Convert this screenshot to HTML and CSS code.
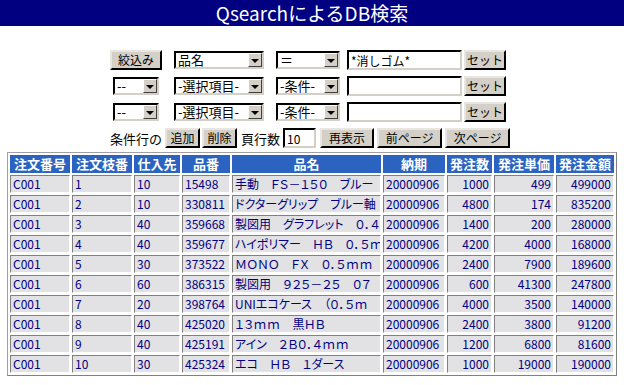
FILE: index.html
```html
<!DOCTYPE html>
<html lang="ja">
<head>
  <meta charset="UTF-8">
  <title>QsearchによるDB検索</title>
  <link rel="stylesheet" href="styles.css">
</head>
<body>
  <h1 class="title">QsearchによるDB検索</h1>

  <!-- 検索条件 -->
  <div class="cond">
    <div class="cond-row">
      <span class="cell-first"><button class="btn btn-filter">絞込み</button></span>
      <span class="sel sel-item"><span class="sel-text">品名</span><span class="sel-arrow"></span></span>
      <span class="sel sel-op"><span class="sel-text">＝</span><span class="sel-arrow"></span></span>
      <input class="txt txt-value" type="text" value="*消しゴム*">
      <button class="btn btn-set">セット</button>
    </div>
    <div class="cond-row">
      <span class="cell-first"><span class="sel sel-andor"><span class="sel-text">--</span><span class="sel-arrow"></span></span></span>
      <span class="sel sel-item"><span class="sel-text">-選択項目-</span><span class="sel-arrow"></span></span>
      <span class="sel sel-op"><span class="sel-text">-条件-</span><span class="sel-arrow"></span></span>
      <input class="txt txt-value" type="text" value="">
      <button class="btn btn-set">セット</button>
    </div>
    <div class="cond-row">
      <span class="cell-first"><span class="sel sel-andor"><span class="sel-text">--</span><span class="sel-arrow"></span></span></span>
      <span class="sel sel-item"><span class="sel-text">-選択項目-</span><span class="sel-arrow"></span></span>
      <span class="sel sel-op"><span class="sel-text">-条件-</span><span class="sel-arrow"></span></span>
      <input class="txt txt-value" type="text" value="">
      <button class="btn btn-set">セット</button>
    </div>
    <div class="cond-row nav-row">
      <span class="label">条件行の</span>
      <button class="btn btn-small">追加</button>
      <button class="btn btn-small">削除</button>
      <span class="label label-rows">頁行数</span>
      <input class="txt txt-rows" type="text" value="10">
      <button class="btn btn-redraw">再表示</button>
      <button class="btn btn-page">前ページ</button>
      <button class="btn btn-page">次ページ</button>
    </div>
  </div>

  <!-- 検索結果 -->
  <table class="result">
    <thead>
      <tr>
        <th class="c-no">注文番号</th>
        <th class="c-br">注文枝番</th>
        <th class="c-sup">仕入先</th>
        <th class="c-code">品番</th>
        <th class="c-name">品名</th>
        <th class="c-date">納期</th>
        <th class="c-qty">発注数</th>
        <th class="c-price">発注単価</th>
        <th class="c-amt">発注金額</th>
      </tr>
    </thead>
    <tbody>
      <tr><td>C001</td><td>1</td><td>10</td><td>15498</td><td class="name">手動　ＦＳ－１５０　ブルー</td><td>20000906</td><td class="num">1000</td><td class="num">499</td><td class="num">499000</td></tr>
      <tr><td>C001</td><td>2</td><td>10</td><td>330811</td><td class="name">ドクターグリップ　ブルー軸</td><td>20000906</td><td class="num">4800</td><td class="num">174</td><td class="num">835200</td></tr>
      <tr><td>C001</td><td>3</td><td>40</td><td>359668</td><td class="name">製図用　グラフレット　０．４</td><td>20000906</td><td class="num">1400</td><td class="num">200</td><td class="num">280000</td></tr>
      <tr><td>C001</td><td>4</td><td>40</td><td>359677</td><td class="name">ハイポリマー　ＨＢ　０．５ｍ</td><td>20000906</td><td class="num">4200</td><td class="num">4000</td><td class="num">168000</td></tr>
      <tr><td>C001</td><td>5</td><td>30</td><td>373522</td><td class="name">ＭＯＮＯ　ＦＸ　０．５ｍｍ</td><td>20000906</td><td class="num">2400</td><td class="num">7900</td><td class="num">189600</td></tr>
      <tr><td>C001</td><td>6</td><td>60</td><td>386315</td><td class="name">製図用　９２５－２５　０７</td><td>20000906</td><td class="num">600</td><td class="num">41300</td><td class="num">247800</td></tr>
      <tr><td>C001</td><td>7</td><td>20</td><td>398764</td><td class="name">UNIエコケース　（０．５ｍ</td><td>20000906</td><td class="num">4000</td><td class="num">3500</td><td class="num">140000</td></tr>
      <tr><td>C001</td><td>8</td><td>40</td><td>425020</td><td class="name">１３ｍｍ　黒ＨＢ</td><td>20000906</td><td class="num">2400</td><td class="num">3800</td><td class="num">91200</td></tr>
      <tr><td>C001</td><td>9</td><td>40</td><td>425191</td><td class="name">アイン　２Ｂ０．４ｍｍ</td><td>20000906</td><td class="num">1200</td><td class="num">6800</td><td class="num">81600</td></tr>
      <tr><td>C001</td><td>10</td><td>30</td><td>425324</td><td class="name">エコ　ＨＢ　１ダース</td><td>20000906</td><td class="num">1000</td><td class="num">19000</td><td class="num">190000</td></tr>
    </tbody>
  </table>
</body>
</html>
```

FILE: styles.css
```css
/* 基本 */
body {
  margin: 0;
  padding: 0;
  background: #fff;
  color: #000;
  font-family: "Noto Sans CJK JP", "Liberation Sans", sans-serif;
  font-size: 12px;
}

/* タイトル */
.title {
  margin: 0;
  height: 26px;
  line-height: 26px;
  background: #000080;
  color: #fff;
  font-size: 19px;
  font-weight: normal;
  text-align: center;
}

/* 検索条件 */
.cond {
  margin: 24px 0 0 107px;
  display: flex;
  flex-direction: column;
  gap: 6px;
}

.cond-row {
  display: flex;
  align-items: center;
  height: 20px;
}

.cell-first {
  width: 58px;
  display: flex;
  justify-content: center;
  margin-right: 9px;
}

/* ボタン */
.btn {
  height: 20px;
  padding: 0;
  background: #d4d0c8;
  border: 2px outset #e8e6e0;
  border-right-color: #404040;
  border-bottom-color: #404040;
  font-family: "Noto Sans CJK JP", sans-serif;
  font-size: 12px;
  line-height: 14px;
  color: #000;
  cursor: pointer;
}

.btn-filter { width: 52px; }
.btn-set { width: 42px; margin-left: 2px; }
.btn-small { width: 35px; margin-right: 2px; }
.btn-redraw { width: 54px; margin-left: 4px; margin-right: 3px; }
.btn-page { width: 65px; margin-right: 3px; }

/* セレクト風 */
.sel {
  display: flex;
  align-items: center;
  height: 18px;
  box-sizing: border-box;
  background: #fff;
  border: 2px inset #d4d0c8;
  border-top-color: #404040;
  border-left-color: #404040;
  margin-right: 12px;
}

.sel-text {
  flex: 1;
  padding-left: 2px;
  font-size: 13px;
  line-height: 14px;
  white-space: nowrap;
}

.sel-arrow {
  width: 14px;
  height: 14px;
  box-sizing: border-box;
  background: #d4d0c8;
  border: 1px solid;
  border-color: #fff #404040 #404040 #fff;
  display: flex;
  align-items: center;
  justify-content: center;
}

.sel-arrow::after {
  content: "";
  border-left: 4px solid transparent;
  border-right: 4px solid transparent;
  border-top: 4px solid #000;
  margin-top: 1px;
}

.sel-andor { width: 46px; margin-right: 0; }
.sel-item { width: 90px; }
.sel-op { width: 64px; margin-right: 7px; }

/* テキスト入力 */
.txt {
  height: 20px;
  box-sizing: border-box;
  padding: 0 2px;
  border: 2px inset #d4d0c8;
  border-top-color: #404040;
  border-left-color: #404040;
  font-family: "Noto Sans CJK JP", sans-serif;
  font-size: 12px;
  background: #fff;
  color: #000;
}

.txt-value { width: 115px; }
.txt-rows { width: 33px; }

.nav-row { margin-left: 3px; }

.label {
  margin-right: 3px;
  font-size: 13px;
}

.label-rows { margin-left: 2px; }

/* 結果テーブル */
.result {
  width: 609px;
  margin: 4px auto 0;
  border: 1px solid #a0a0a0;
  border-right-color: #808080;
  border-bottom-color: #808080;
  border-collapse: separate;
  border-spacing: 2px;
  table-layout: fixed;
}

.result th,
.result td {
  box-sizing: border-box;
  height: 18px;
  padding: 0 2px;
  white-space: nowrap;
  overflow: hidden;
  line-height: 16px;
}

.result th {
  background: #2a64c0;
  color: #fff;
  font-size: 13px;
  font-weight: bold;
  text-align: center;
  border: 1px solid #2a64c0;
}

.result td {
  background: #e2e2e4;
  color: #000080;
  font-size: 12px;
  border: 1px solid;
  border-color: #808080 #fff #fff #808080;
}

.result td.num { text-align: right; }
.result td.name { font-feature-settings: "palt"; }

.c-no { width: 60px; }
.c-br { width: 60px; }
.c-sup { width: 46px; }
.c-code { width: 48px; }
.c-name { width: 149px; }
.c-date { width: 62px; }
.c-qty { width: 45px; }
.c-price { width: 60px; }
.c-amt { width: 58px; }
```
